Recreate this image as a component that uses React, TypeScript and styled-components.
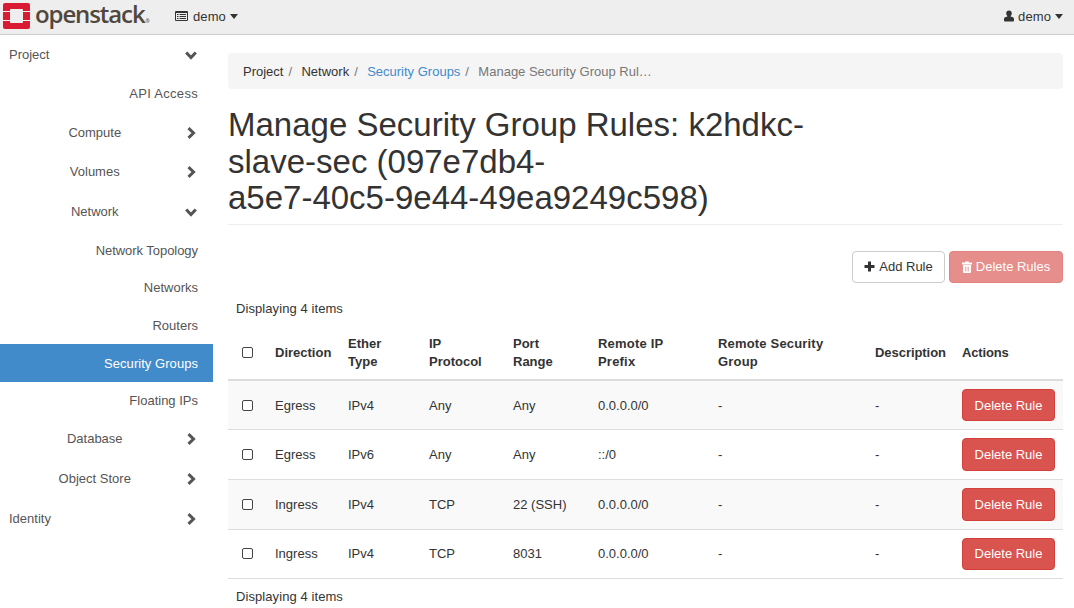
import React from 'react';
import styled, { createGlobalStyle } from 'styled-components';

const GlobalStyle = createGlobalStyle`
  * { box-sizing: border-box; }
  html, body { margin: 0; padding: 0; height: 608px; overflow: hidden; background: #fff; }
  body { font: 13px/18px "Liberation Sans", Arial, sans-serif; color: #333; }
`;

const TopBar = styled.header`
  display: flex;
  align-items: center;
  height: 35px;
  padding-right: 11px;
  background: #eee;
  border-bottom: 1px solid #ccc;
`;

const Brand = styled.div`
  display: flex;
  width: 175px;
  height: 34px;
`;

const LogoMark = styled.svg`
  display: block;
  width: 27px;
  height: 26px;
  margin: 3px 0 0 3px;
`;

const LogoText = styled.span`
  margin-left: 5px;
  font: 600 24px/28px "Open Sans", sans-serif;
  letter-spacing: -1.1px;
  color: #50473f;
  white-space: nowrap;
`;

const Registered = styled.span`
  margin-left: 1px;
  font-size: 5px;
  letter-spacing: 0;
`;

const TopMenu = styled.div<{ $end?: boolean }>`
  display: flex;
  align-items: center;
  gap: 4px;
  margin-left: ${(p) => (p.$end ? 'auto' : '0')};
  padding-bottom: 1px;
`;

const MenuIcon = styled.svg`
  display: block;
  height: 12px;
  margin-bottom: 1px;
`;

const MenuLabel = styled.span`
  letter-spacing: 0.1px;
`;

const Caret = styled.span`
  border: 4px solid transparent;
  border-top: 5px solid #333;
  border-bottom: 0;
`;

const Body = styled.div`
  display: flex;
`;

const Sidebar = styled.nav`
  width: 213px;
  flex: none;
`;

const NavItem = styled.div<{ $h: number; $active?: boolean; $drop?: boolean }>`
  display: flex;
  align-items: center;
  height: ${(p) => p.$h}px;
  padding: ${(p) => (p.$drop ? 2 : 0)}px 15px 0 9px;
  background: ${(p) => (p.$active ? '#428bca' : 'transparent')};
  color: ${(p) => (p.$active ? '#fff' : '#555')};
`;

const NavLabel = styled.span<{ $align: 'left' | 'center' | 'right'; $track?: number }>`
  flex: 1;
  text-align: ${(p) => p.$align};
  padding-right: ${(p) => (p.$align === 'center' ? '3.5px' : '0')};
  letter-spacing: ${(p) => p.$track ?? 0}px;
`;

const Chevron = styled.svg<{ $open?: boolean }>`
  width: 14px;
  height: 14px;
  transform: ${(p) => (p.$open ? 'rotate(90deg)' : 'none')};
`;

const Main = styled.main`
  width: 835px;
  margin-left: 15px;
  padding-top: 18px;
`;

const Breadcrumb = styled.div`
  display: flex;
  align-items: center;
  height: 36px;
  padding: 2px 15px 0;
  border-radius: 4px;
  background: #f5f5f5;
`;

const Crumb = styled.span<{ $color: string }>`
  color: ${(p) => p.$color};
`;

const Slash = styled.span`
  width: 18px;
  padding-left: 5px;
  color: #777;
`;

const Title = styled.h1`
  margin: 0;
  height: 136px;
  padding-top: 18px;
  border-bottom: 1px solid #eee;
  font-size: 33px;
  line-height: 36.5px;
  font-weight: 400;
`;

const Actions = styled.div`
  display: flex;
  justify-content: flex-end;
  gap: 4px;
  padding-top: 26px;
`;

const Button = styled.button<{ $kind: 'plain' | 'danger'; $w: number; $h?: number; $drop?: boolean; $disabled?: boolean }>`
  display: flex;
  align-items: center;
  justify-content: center;
  gap: 4px;
  width: ${(p) => p.$w}px;
  height: ${(p) => p.$h ?? 32}px;
  padding: ${(p) => (p.$drop ? 2 : 0)}px 0 0;
  border: 1px solid ${(p) => (p.$kind === 'danger' ? '#d43f3a' : '#ccc')};
  border-radius: 4px;
  background: ${(p) => (p.$kind === 'danger' ? '#d9534f' : '#fff')};
  color: ${(p) => (p.$kind === 'danger' ? '#fff' : '#333')};
  opacity: ${(p) => (p.$disabled ? 0.65 : 1)};
  font: inherit;
`;

const ButtonIcon = styled.svg`
  display: block;
  margin-bottom: 1px;
`;

const Count = styled.div<{ $top: number }>`
  padding: ${(p) => p.$top}px 8px 0;
  letter-spacing: 0.08px;
`;

const Table = styled.table`
  width: 835px;
  margin-top: 9px;
  border-collapse: separate;
  border-spacing: 0;
  table-layout: fixed;
`;

const HeadCell = styled.th<{ $track?: number }>`
  height: 54px;
  padding: 0 0 1px 8px;
  border-bottom: 2px solid #ddd;
  text-align: left;
  vertical-align: middle;
  white-space: pre;
  letter-spacing: ${(p) => p.$track ?? 0}px;
`;

const Row = styled.tr<{ $h: number; $striped: boolean }>`
  height: ${(p) => p.$h}px;
  background: ${(p) => (p.$striped ? '#f9f9f9' : '#fff')};
`;

const Cell = styled.td`
  padding: 8px 0 0 8px;
  border-bottom: 1px solid #ddd;
  vertical-align: top;
`;

const CellText = styled.div<{ $line: number }>`
  line-height: ${(p) => p.$line}px;
`;

const Check = styled.span<{ $top: number }>`
  display: block;
  width: 11px;
  height: 11px;
  margin: ${(p) => p.$top}px 0 0 6px;
  border: 1px solid #444;
  border-radius: 2px;
  background: #fff;
`;

type NavEntry = {
  label: string;
  h: number;
  align: 'left' | 'center' | 'right';
  icon?: 'open' | 'closed';
  active?: boolean;
  drop?: boolean;
  track?: number;
};

const nav: NavEntry[] = [
  { label: 'Project', h: 39, align: 'left', icon: 'open' },
  { label: 'API Access', h: 39, align: 'right', track: 0.3 },
  { label: 'Compute', h: 39, align: 'center', icon: 'closed' },
  { label: 'Volumes', h: 40, align: 'center', icon: 'closed' },
  { label: 'Network', h: 39, align: 'center', icon: 'open' },
  { label: 'Network Topology', h: 38, align: 'right', drop: true, track: -0.05 },
  { label: 'Networks', h: 37, align: 'right' },
  { label: 'Routers', h: 38, align: 'right', drop: true },
  { label: 'Security Groups', h: 38, align: 'right', active: true, drop: true, track: 0.05 },
  { label: 'Floating IPs', h: 37, align: 'right' },
  { label: 'Database', h: 40, align: 'center', icon: 'closed' },
  { label: 'Object Store', h: 39, align: 'center', icon: 'closed' },
  { label: 'Identity', h: 40, align: 'left', icon: 'closed', drop: true },
];

const columns: { label: string; width: number; track?: number }[] = [
  { label: 'Direction', width: 73 },
  { label: 'Ether\nType', width: 81 },
  { label: 'IP\nProtocol', width: 84 },
  { label: 'Port\nRange', width: 85 },
  { label: 'Remote IP\nPrefix', width: 120, track: 0.2 },
  { label: 'Remote Security\nGroup', width: 157, track: 0.18 },
  { label: 'Description', width: 87, track: -0.05 },
  { label: 'Actions', width: 109, track: -0.15 },
];

const rows = [
  { h: 49, line: 34, button: 32, cells: ['Egress', 'IPv4', 'Any', 'Any', '0.0.0.0/0', '-', '-'] },
  { h: 50, line: 34, button: 33, cells: ['Egress', 'IPv6', 'Any', 'Any', '::/0', '-', '-'] },
  { h: 50, line: 34, button: 33, cells: ['Ingress', 'IPv4', 'TCP', '22 (SSH)', '0.0.0.0/0', '-', '-'] },
  { h: 49, line: 32, button: 32, cells: ['Ingress', 'IPv4', 'TCP', '8031', '0.0.0.0/0', '-', '-'] },
];

export default function App() {
  return (
    <>
      <GlobalStyle />
      <TopBar>
        <Brand>
          <LogoMark viewBox="0 0 27 26">
            <path fill="#da1a32" d="M2 0H25Q27 0 27 2V8H20V7Q20 6 19 6H8Q7 6 7 7V8H0V2Q0 0 2 0ZM0 9H7V17H0ZM20 9H27V17H20ZM0 18H7V19Q7 20 8 20H19Q20 20 20 19V18H27V24Q27 26 25 26H2Q0 26 0 24Z" />
          </LogoMark>
          <LogoText>openstack<Registered>®</Registered></LogoText>
        </Brand>
        <TopMenu>
          <MenuIcon width="14" viewBox="0 0 14 12">
            <path fill="#333" fillRule="evenodd" d="M1 1H12Q13 1 13 2V10Q13 11 12 11H1Q0 11 0 10V2Q0 1 1 1ZM1 3V10H12V3Z" />
            <path stroke="#333" d="M2 4.5H3.5M4.5 4.5H11M2 6.5H3.5M4.5 6.5H11M2 8.5H3.5M4.5 8.5H11" />
          </MenuIcon>
          <MenuLabel>demo</MenuLabel>
          <Caret />
        </TopMenu>
        <TopMenu $end>
          <MenuIcon width="10" viewBox="0 0 10 12">
            <path fill="#333" d="M5 0.5C6.7 0.5 7.8 1.6 7.8 3.3C7.8 4.6 7.3 5.4 6.6 6V6.5L9 7.2Q10 7.7 10 9V10.5Q10 11.5 9 11.5H1Q0 11.5 0 10.5V9Q0 7.7 1 7.2L3.4 6.5V6C2.7 5.4 2.2 4.6 2.2 3.3C2.2 1.6 3.3 0.5 5 0.5Z" />
          </MenuIcon>
          <MenuLabel>demo</MenuLabel>
          <Caret />
        </TopMenu>
      </TopBar>
      <Body>
        <Sidebar>
          {nav.map((n) => (
            <NavItem key={n.label} $h={n.h} $active={n.active} $drop={n.drop}>
              <NavLabel $align={n.align} $track={n.track}>{n.label}</NavLabel>
              {n.icon && (
                <Chevron viewBox="0 0 14 14" $open={n.icon === 'open'}>
                  <path d="M4.5 2.2L9.5 7L4.5 11.8" fill="none" stroke="#555" strokeWidth="3" />
                </Chevron>
              )}
            </NavItem>
          ))}
        </Sidebar>
        <Main>
          <Breadcrumb>
            <Crumb $color="#333">Project</Crumb>
            <Slash>/</Slash>
            <Crumb $color="#333">Network</Crumb>
            <Slash>/</Slash>
            <Crumb $color="#428bca">Security Groups</Crumb>
            <Slash>/</Slash>
            <Crumb $color="#777">Manage Security Group Rul…</Crumb>
          </Breadcrumb>
          <Title>
            Manage Security Group Rules: k2hdkc-<br />slave-sec (097e7db4-<br />a5e7-40c5-9e44-49ea9249c598)
          </Title>
          <Actions>
            <Button $kind="plain" $w={93}>
              <ButtonIcon width="11" height="11" viewBox="0 0 11 11">
                <path d="M5.5 0.5V10.5M0.5 5.5H10.5" stroke="#333" strokeWidth="3" />
              </ButtonIcon>
              Add Rule
            </Button>
            <Button $kind="danger" $w={114} $disabled>
              <ButtonIcon width="10" height="12" viewBox="0 0 10 12">
                <path fill="#fff" fillRule="evenodd" d="M3 1.5Q3 0.5 4 0.5H6Q7 0.5 7 1.5H10V3.5H0V1.5ZM1 4H9V11Q9 12 8 12H2Q1 12 1 11ZM3 5.5V10.5H3.6V5.5ZM4.7 5.5V10.5H5.3V5.5ZM6.4 5.5V10.5H7V5.5Z" />
              </ButtonIcon>
              Delete Rules
            </Button>
          </Actions>
          <Count $top={17}>Displaying 4 items</Count>
          <Table>
            <colgroup>
              <col width={39} />
              {columns.map((c) => <col key={c.label} width={c.width} />)}
            </colgroup>
            <thead>
              <tr>
                <HeadCell><Check $top={0} /></HeadCell>
                {columns.map((c) => <HeadCell key={c.label} $track={c.track}>{c.label}</HeadCell>)}
              </tr>
            </thead>
            <tbody>
              {rows.map((r, i) => (
                <Row key={i} $h={r.h} $striped={i % 2 === 0}>
                  <Cell><Check $top={r.line === 34 ? 11 : 10} /></Cell>
                  {r.cells.map((c, j) => <Cell key={j}><CellText $line={r.line}>{c}</CellText></Cell>)}
                  <Cell><Button $kind="danger" $w={93} $h={r.button} $drop={i === 0}>Delete Rule</Button></Cell>
                </Row>
              ))}
            </tbody>
          </Table>
          <Count $top={9}>Displaying 4 items</Count>
        </Main>
      </Body>
    </>
  );
}
